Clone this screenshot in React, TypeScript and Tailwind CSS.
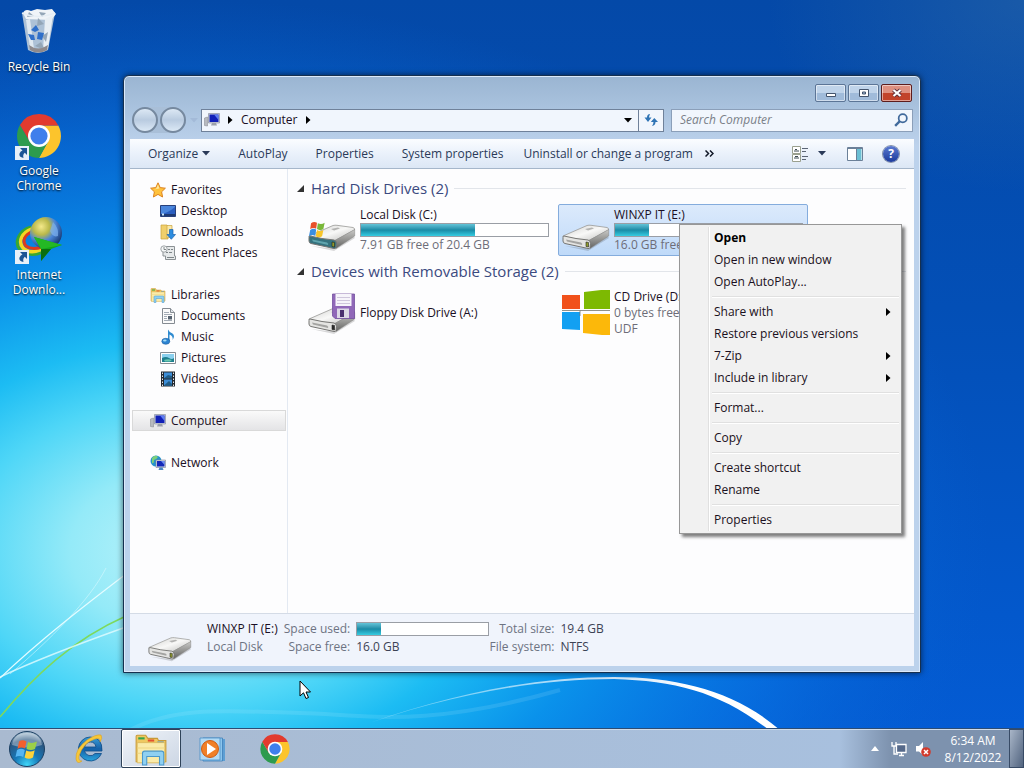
import type { ReactNode } from 'react';

interface NavEntry {
  label: string;
  icon: ReactNode;
  children?: NavEntry[];
  selected?: boolean;
}

interface MenuEntry {
  label: string;
  bold?: boolean;
  submenu?: boolean;
}

/* ---------- Icons ---------- */

function ChromeIcon({ className }: { className?: string }) {
  return (
    <svg viewBox="0 0 48 48" className={className} aria-hidden="true">
      <path d="M24 13.500H43.300A22 22 0 0 1 24 46L33 29.500Z" fill="#fcc42c" />
      <path d="M4.950 13A22 22 0 0 0 24 46L33.200 29.500L24 24L14.800 29.500Z" fill="#2d9b4e" />
      <path d="M4.950 13A22 22 0 0 1 43.300 13.500H24L14.800 29.500Z" fill="#e23b2e" />
      <circle cx="24" cy="24" r="11" fill="#fff" />
      <circle cx="24" cy="24" r="8.600" fill="#3f7fec" />
    </svg>
  );
}

function RecycleBinIcon() {
  return (
    <svg viewBox="0 0 48 48" className="size-12" aria-hidden="true">
      <path d="M7 5L13 42Q23 48 33 42L40 5Z" fill="#bccbd9" fillOpacity=".92" />
      <path d="M8 5Q10 0 16 3L22 1L30 2L37 1L41 6L36 12L11 11Z" fill="#f0f4f8" />
      <path d="M30 11L38 7L33 40L28 43Z" fill="#e9eff4" />
      <path d="M11 12L15 11L19 41L15 40Z" fill="#dfe8f0" />
      <path d="M14 4L19 8L12 9ZM24 4L31 5L27 9ZM23 10L29 16L22 18ZM27 28L33 24L31 34ZM20 38L26 34L30 42Z" fill="#94a6b7" />
      <path d="M14 37Q23 44 33 37L32 42Q23 47 15 42Z" fill="#8f8a8c" />
      <path d="M16 22L21 17L24 22L20 24ZM23 24L29 25L27 32L22 31ZM13 26L19 27L20 32L16 32Z" fill="#2f6fc9" />
      <path d="M7 5Q23 12 40 5" stroke="#e6eef5" strokeWidth="1.500" fill="none" />
    </svg>
  );
}

function IdmIcon() {
  return (
    <svg viewBox="0 0 48 48" className="size-12" aria-hidden="true">
      <defs>
        <radialGradient id="idmGlobe" cx=".35" cy=".3" r=".75">
          <stop offset="0" stopColor="#f4e98a" />
          <stop offset=".35" stopColor="#b9b84a" />
          <stop offset=".6" stopColor="#4a86d8" />
          <stop offset="1" stopColor="#16356e" />
        </radialGradient>
      </defs>
      <path d="M16 11C3 15 -1 27 5 34C10 40 22 39 28 36" fill="none" stroke="#3aa82e" strokeWidth="3" />
      <path d="M17 13C6 17 3 26 8 32C13 37 21 36 28 33" fill="none" stroke="#f4d822" strokeWidth="3.500" />
      <path d="M18 15C9 19 7 25 11 30C15 33 21 33 27 31" fill="none" stroke="#dc3a1e" strokeWidth="3" />
      <circle cx="31" cy="17" r="16" fill="url(#idmGlobe)" />
      <path d="M38 6Q44 12 43 20Q38 22 35 15Z" fill="#7fb2ee" fillOpacity=".7" />
      <path d="M19 21L47 29L36 33L26 45L26 33Z" fill="#12a818" />
      <path d="M19 21L26 33L47 29Z" fill="#24b824" />
      <path d="M26 33L26 45L36 33Z" fill="#0a6d10" />
    </svg>
  );
}

function ShortcutArrow() {
  return (
    <svg viewBox="0 0 14 14" className="absolute bottom-0 left-0 size-3.5" aria-hidden="true">
      <path d="M0 0H14V14H0Z" fill="#e8f0f8" />
      <path d="M5 2H12V9L9.800 6.800Q7.500 8.500 8.500 12Q3.500 11 4.500 7.500Q5.500 5 7.500 4.500Z" fill="#1c5594" />
    </svg>
  );
}

type DriveKind = 'plain' | 'system' | 'floppy';

function DriveIcon({ kind = 'plain', className }: { kind?: DriveKind; className?: string }) {
  return (
    <svg viewBox="0 0 48 48" className={className} aria-hidden="true">
      <defs>
        <linearGradient id="driveTop" x1="0" y1="0" x2="1" y2="1">
          <stop offset="0" stopColor="#cfcfcd" />
          <stop offset=".5" stopColor="#f8f8f7" />
          <stop offset="1" stopColor="#bcbcba" />
        </linearGradient>
        <linearGradient id="driveSide" x1="0" y1="0" x2="0" y2="1">
          <stop offset="0" stopColor="#cacac8" />
          <stop offset="1" stopColor="#636361" />
        </linearGradient>
      </defs>
      <path d="M3 40L26 45L47 32L44 28L20 42Z" fill="#000" fillOpacity=".15" />
      <path d="M1 30L25 19.500Q27 19 29 19.300L45 21.500Q47 22 46.500 24L26 35Q14 34 1 31Z" fill="url(#driveTop)" stroke="#999997" strokeWidth=".8" />
      <path d="M26 35L46.700 23.500V30L28 42.500Z" fill="url(#driveSide)" stroke="#858583" strokeWidth=".5" />
      <path d="M2 30Q14 33 26 34Q28.500 34.500 28.500 37.500L28 41.500Q27.500 43 26 42.500L3 37.500Q1 37 1 35V31.500Q1 30 2 30Z" fill={kind === 'system' ? '#35727e' : '#e4e4e2'} stroke="#757573" strokeWidth="1" />
      <path d="M4 33.500L19 36.500Q21 37.500 20 39L5 35.500Z" fill={kind === 'system' ? '#5fa5ae' : '#a3a3a1'} />
      <path d="M24 36L26.500 36.500V41L24 40.500Z" fill={kind === 'floppy' ? '#2b2b2b' : '#8f9a2a'} stroke="#222" strokeWidth=".6" />
      <path d="M23 23L30 21.500L32 22.500L26 24.500Z" fill="#8a8a88" fillOpacity=".6" />
      {kind === 'system' && (
        <svg x="0" y="15" width="18" height="17" viewBox="0 0 20 20">
          <path d="M3 2.500Q6.500 0 10 2L9 9Q5.500 7 2 9.500Z" fill="#e8512a" />
          <path d="M11 2.500Q15 4.500 19 2L17.500 9.500Q14 12 10 9.500Z" fill="#7ab83a" />
          <path d="M2 10.500Q5.500 8 9 10L8 17.500Q4.500 15.500 .5 18Z" fill="#3a8ee0" />
          <path d="M10 10.500Q14 13 17.500 10.500L16 18Q12.500 20.500 8.500 18Z" fill="#f8c52a" />
        </svg>
      )}
      {kind === 'floppy' && (
        <g>
          <path d="M24.500 5H46.500V29.500H27L24.500 27Z" fill="#9068b8" stroke="#7450a0" strokeWidth=".8" />
          <path d="M27.500 5H43.500V17H27.500Z" fill="#f6f4fa" />
          <path d="M29 8.500H42M29 11.500H42M29 14.500H42" stroke="#cfc6dc" />
          <path d="M29 19.500H41V29H29Z" fill="#dcd8e6" />
          <path d="M32 21H36V28H32Z" fill="#4a3070" />
        </g>
      )}
    </svg>
  );
}

function MicrosoftIcon({ className }: { className?: string }) {
  return (
    <svg viewBox="0 0 48 48" className={className} aria-hidden="true">
      <path d="M0 6H18V20H0Z" fill="#f1511b" />
      <path d="M22 3L39 1H48V20H22Z" fill="#7db902" />
      <path d="M0 23H18V41L0 40Z" fill="#12a0f2" />
      <path d="M21 25H48V46H40L21 44Z" fill="#fcb80a" />
      <path d="M0 21.500H18M18 27V21.500H48" fill="none" stroke="#76766c" strokeWidth=".8" />
    </svg>
  );
}

function ComputerIcon() {
  return (
    <svg viewBox="0 0 16 16" className="size-4" aria-hidden="true">
      <path d="M.5 6L3.500 5V14L.5 13.500Z" fill="#b7bac0" stroke="#8d9097" strokeWidth=".6" />
      <path d="M4.500 1.500H15.500V11H4.500Z" fill="#cfd3dc" stroke="#8a90a2" strokeWidth=".7" />
      <path d="M5.500 2.500H14.500V10H5.500Z" fill="#1120b8" />
      <path d="M10 2.500H14.500V8Z" fill="#5d7df0" />
      <path d="M8 11H12L13 13.500H7Z" fill="#9ba0ab" />
    </svg>
  );
}

function NetworkIcon() {
  return (
    <svg viewBox="0 0 16 16" className="size-4" aria-hidden="true">
      <circle cx="6" cy="6" r="5.500" fill="#2692cc" />
      <path d="M2 3Q5 -1 8 2Q6 5 4 5Q4 9 2 8Z" fill="#7ccf7a" />
      <path d="M6 5H15.500V12.500H6Z" fill="#d5d9e2" stroke="#7c8598" strokeWidth=".6" />
      <path d="M7 6H14.500V11.500H7Z" fill="#1428b8" />
      <path d="M11 6H14.500V10Z" fill="#6f90f2" />
      <path d="M9.500 12.500H12.500L13.500 15H8.500Z" fill="#4c87c4" />
    </svg>
  );
}

function StarIcon() {
  return (
    <svg viewBox="0 0 16 16" className="size-4" aria-hidden="true">
      <path d="M8 .8L10.200 5.600L15.400 6.200L11.600 9.800L12.600 15L8 12.400L3.400 15L4.400 9.800L.6 6.200L5.800 5.600Z" fill="#ffc23c" stroke="#dd8320" strokeWidth="1" />
      <path d="M8 2.500L9.300 6.500L4 7.500L6.300 6.400Z" fill="#ffe9a0" />
    </svg>
  );
}

function DesktopIcon() {
  return (
    <svg viewBox="0 0 16 16" className="size-4" aria-hidden="true">
      <path d="M.5 2.500H15.500V13.500H.5Z" fill="#2b5fc0" stroke="#28407a" />
      <path d="M1 11Q8 10 15 4V3H1Z" fill="#4b86dc" />
      <path d="M1 12H15" stroke="#1c2e58" strokeWidth="1.500" />
      <path d="M2 10.500H4V12.500H2Z" fill="#c9e6fa" />
    </svg>
  );
}

function DownloadsIcon() {
  return (
    <svg viewBox="0 0 16 16" className="size-4" aria-hidden="true">
      <path d="M1 1H7L8 3V15H1Z" fill="#f0cf6c" stroke="#c9a23e" strokeWidth=".7" />
      <path d="M7 1.500H12V12L7 14Z" fill="#fae9a8" stroke="#c9a23e" strokeWidth=".7" />
      <path d="M9.500 5.500H13V10.500H15.500L11.300 15.300L7 10.500H9.500Z" fill="#2c8de0" stroke="#1b62ac" strokeWidth=".7" />
    </svg>
  );
}

function RecentIcon() {
  return (
    <svg viewBox="0 0 16 16" className="size-4" aria-hidden="true">
      <path d="M3 1.500H14.500V11H15.500V14.500H5.500V11H3Z" fill="#e6e9ea" stroke="#8b9194" />
      <circle cx="4" cy="4" r="3.200" fill="#f6f8f8" stroke="#8b9194" strokeWidth=".8" />
      <path d="M4 2V4.500H6" stroke="#676d70" fill="none" strokeWidth=".8" />
      <path d="M8 4.500H10M11 4.500H13M6 7.500H8M9 7.500H12M7 12.500H14" stroke="#7d8487" fill="none" />
    </svg>
  );
}

function LibrariesIcon({ className = 'size-4' }: { className?: string }) {
  return (
    <svg viewBox="0 0 32 32" className={className} aria-hidden="true">
      <path d="M2 4Q2 3 3 3H11L13 6H22L23 8H30V28H2Z" fill="#efc860" stroke="#c89a38" strokeWidth="1" />
      <path d="M4 5H10V7H4Z" fill="#35a34a" />
      <path d="M13 7H19V9H13Z" fill="#e25230" />
      <path d="M22 9H28V11H22Z" fill="#3b8bd8" />
      <path d="M3 10H29V29H3Z" fill="#faebaa" stroke="#dcb85a" strokeWidth=".8" />
      <path d="M3 15H29M3 20H29" stroke="#eed580" />
      <path d="M8 31V20Q8 18 10 18H26Q28 18 28 20V31H24V23H12V31Z" fill="#8fd0f2" stroke="#4a98cc" strokeWidth="1" />
    </svg>
  );
}

function DocumentIcon() {
  return (
    <svg viewBox="0 0 16 16" className="size-4" aria-hidden="true">
      <path d="M2.500 .5H10.500L14.500 4.500V15.500H2.500Z" fill="#fbfbfb" stroke="#858b92" />
      <path d="M10.500 .5V4.500H14.500" fill="#dfe3e8" stroke="#858b92" />
      <path d="M4 4.500H9M4 6.500H12M4 8.500H7M4 10.500H7M4 12.500H12" stroke="#a3abb5" />
      <path d="M8 8H12V11.500H8Z" fill="#566270" />
    </svg>
  );
}

function MusicIcon() {
  return (
    <svg viewBox="0 0 16 16" className="size-4" aria-hidden="true">
      <path d="M8 .5Q9 3 12.500 4.500Q15.500 7 12.500 11Q13.500 7 9.500 5.500V12H8Z" fill="#2f8bd0" />
      <ellipse cx="5.800" cy="12.300" rx="4" ry="3" fill="#2c84d2" stroke="#1b5e9e" strokeWidth=".6" />
      <ellipse cx="4.800" cy="11.500" rx="1.800" ry="1" fill="#a3dcf7" />
    </svg>
  );
}

function PictureIcon() {
  return (
    <svg viewBox="0 0 16 16" className="size-4" aria-hidden="true">
      <path d="M.5 2.500H15.500V13.500H.5Z" fill="#fff" stroke="#868c93" />
      <path d="M2 4H14V12H2Z" fill="#8bd0ee" />
      <path d="M2 8Q6 6 9 8T14 8V12H2Z" fill="#1f7f8e" />
      <path d="M4 10Q8 8.500 12 10L10 11.500H5Z" fill="#6cc7b0" />
    </svg>
  );
}

function VideoIcon() {
  return (
    <svg viewBox="0 0 16 16" className="size-4" aria-hidden="true">
      <path d="M1 .5H15V15.500H1Z" fill="#23282f" />
      <path d="M4 1.500H12V7.300H4ZM4 8.500H12V14.500H4Z" fill="#3d8ed8" />
      <path d="M4 7.300L8 4L12 5V7.300ZM4 14.500L9 10L12 13V14.500Z" fill="#215c86" />
      <path d="M2.500 1.500V15M13.500 1.500V15" stroke="#e4e8ec" strokeDasharray="1.500 1.500" />
    </svg>
  );
}

function DownTriangle() {
  return (
    <svg viewBox="0 0 8 5" className="h-[5px] w-2 shrink-0" aria-hidden="true">
      <path d="M0 0H8L4 4.500Z" fill="currentColor" />
    </svg>
  );
}

function RightTriangle() {
  return (
    <svg viewBox="0 0 5 8" className="h-2 w-[5px] shrink-0" aria-hidden="true">
      <path d="M0 0V8L4.500 4Z" fill="#000" />
    </svg>
  );
}

function StartOrb() {
  return (
    <svg viewBox="0 0 38 38" className="size-[38px]" aria-hidden="true">
      <defs>
        <radialGradient id="orb" cx=".5" cy=".95" r=".9">
          <stop offset="0" stopColor="#3ed6f8" />
          <stop offset=".4" stopColor="#1678b8" />
          <stop offset=".8" stopColor="#2a5680" />
          <stop offset="1" stopColor="#9fb8cc" />
        </radialGradient>
      </defs>
      <circle cx="19" cy="19" r="17.500" fill="url(#orb)" stroke="#1b3f62" strokeWidth="1" />
      <path d="M4 15Q6 3 19 3T34 15Q19 20 4 15Z" fill="#fff" fillOpacity=".35" />
      <path d="M11 11.500Q14.500 9 18.500 11.500L17 18.500Q13 16.500 9.500 19Z" fill="#f2602e" />
      <path d="M20 12Q24 14 29 11.500L27 19Q23 21 18.500 19Z" fill="#9bd048" />
      <path d="M9 20Q13 17.500 16.800 20L15.200 27Q11.500 25 7.500 27Z" fill="#55b5f2" />
      <path d="M18.200 20.500Q22.500 22.500 26.700 20.200L25 27.500Q21 30 16.600 27.500Z" fill="#fdd23a" />
    </svg>
  );
}

function IeIcon() {
  return (
    <svg viewBox="0 0 32 32" className="size-8" aria-hidden="true">
      <defs>
        <linearGradient id="ieBlue" x1="0" y1="0" x2="0" y2="1">
          <stop offset="0" stopColor="#3c9fd8" />
          <stop offset=".5" stopColor="#1560a8" />
          <stop offset="1" stopColor="#2aa4dc" />
        </linearGradient>
      </defs>
      <path d="M17 4A12 12 0 1 0 28.500 20.500H22A6 6 0 0 1 11.500 18H29Q29.500 4 17 4ZM11.500 14Q13 9 17.500 9T23 14Z" fill="url(#ieBlue)" stroke="#0c4a86" strokeWidth=".8" />
      <path d="M28 2Q30 5 27 9Q28 4 22 6Q10 10 6 23Q5 28 9 28Q4 32 3 26Q2 16 14 7Q23 1 28 2Z" fill="#f6c73a" stroke="#d79a1e" strokeWidth=".5" />
    </svg>
  );
}

function MediaPlayerIcon() {
  return (
    <svg viewBox="0 0 32 32" className="size-8" aria-hidden="true">
      <path d="M9 6H28V28H9Z" fill="#5d9fd4" />
      <path d="M6 5H25.500V28H6Z" fill="#8cc5ec" stroke="#3f7fb8" strokeWidth=".8" />
      <path d="M3 5H23V27H3Z" fill="#b3daf4" stroke="#4a8fc8" strokeWidth=".8" />
      <circle cx="13" cy="16" r="8.500" fill="#f08028" stroke="#cf5c12" strokeWidth="1" />
      <path d="M10 10L19 16L10 22Z" fill="#fff" />
    </svg>
  );
}

/* ---------- Data ---------- */

const navTree: NavEntry[] = [
  {
    label: 'Favorites',
    icon: <StarIcon />,
    children: [
      { label: 'Desktop', icon: <DesktopIcon /> },
      { label: 'Downloads', icon: <DownloadsIcon /> },
      { label: 'Recent Places', icon: <RecentIcon /> },
    ],
  },
  {
    label: 'Libraries',
    icon: <LibrariesIcon />,
    children: [
      { label: 'Documents', icon: <DocumentIcon /> },
      { label: 'Music', icon: <MusicIcon /> },
      { label: 'Pictures', icon: <PictureIcon /> },
      { label: 'Videos', icon: <VideoIcon /> },
    ],
  },
  { label: 'Computer', icon: <ComputerIcon />, selected: true },
  { label: 'Network', icon: <NetworkIcon /> },
];

const menuGroups: MenuEntry[][] = [
  [{ label: 'Open', bold: true }, { label: 'Open in new window' }, { label: 'Open AutoPlay...' }],
  [
    { label: 'Share with', submenu: true },
    { label: 'Restore previous versions' },
    { label: '7-Zip', submenu: true },
    { label: 'Include in library', submenu: true },
  ],
  [{ label: 'Format...' }],
  [{ label: 'Copy' }],
  [{ label: 'Create shortcut' }, { label: 'Rename' }],
  [{ label: 'Properties' }],
];

/* ---------- Pieces ---------- */

function Wallpaper() {
  return (
    <svg viewBox="0 0 1024 768" preserveAspectRatio="none" className="absolute inset-0 size-full" aria-hidden="true">
      <defs>
        <linearGradient id="sky" x1="0" y1="0" x2="0" y2="1">
          <stop offset="0" stopColor="#0449a8" />
          <stop offset=".4" stopColor="#034fb6" />
          <stop offset=".8" stopColor="#0358cc" />
          <stop offset="1" stopColor="#045cd6" />
        </linearGradient>
        <radialGradient id="glow" gradientUnits="userSpaceOnUse" cx="0" cy="0" r="1" gradientTransform="translate(190 550) scale(800 550)">
          <stop offset="0" stopColor="#c0f4fa" />
          <stop offset=".15" stopColor="#94eaf8" />
          <stop offset=".28" stopColor="#4ed6f7" />
          <stop offset=".38" stopColor="#1cbcf3" />
          <stop offset=".53" stopColor="#0a94ec" stopOpacity=".95" />
          <stop offset=".75" stopColor="#0878e6" stopOpacity=".6" />
          <stop offset="1" stopColor="#0560d0" stopOpacity="0" />
        </radialGradient>
        <radialGradient id="corner" cx="1" cy="0" r=".25">
          <stop offset="0" stopColor="#3f78a8" stopOpacity=".35" />
          <stop offset="1" stopColor="#3f78a8" stopOpacity="0" />
        </radialGradient>
        <linearGradient id="arc" x1="0" y1="0" x2="1" y2="0">
          <stop offset="0" stopColor="#fff" stopOpacity=".2" />
          <stop offset=".5" stopColor="#fff" stopOpacity=".7" />
          <stop offset=".8" stopColor="#fff" />
        </linearGradient>
      </defs>
      <path d="M0 0H1024V768H0Z" fill="url(#sky)" />
      <path d="M0 0H1024V768H0Z" fill="url(#glow)" />
      <path d="M0 0H1024V768H0Z" fill="url(#corner)" />
      <path d="M0 717C34 676 72 640 126 616" stroke="#7ed95c" strokeWidth="1.500" fill="none" />
      <path d="M0 678C40 640 84 606 126 574" stroke="#e4fcff" strokeWidth="1.200" fill="none" />
      <path d="M0 677C40 658 84 642 126 627" stroke="#e4fcff" strokeOpacity=".8" strokeWidth="1.500" fill="none" />
      <path d="M10 674C50 640 90 600 106 568" stroke="#e4fcff" strokeOpacity=".5" fill="none" />
      <path d="M130 730C180 704 240 712 300 713S420 730 560 690" stroke="#d8faff" strokeOpacity=".12" strokeWidth="4" fill="none" />
      <path d="M350 730C440 696 530 677 614 677C680 677 736 692 780 730H769C720 692 676 681 614 679C530 679 440 697 350 730Z" fill="url(#arc)" />
    </svg>
  );
}

function DesktopShortcut({ label, shortcut, children }: { label: string; shortcut?: boolean; children: ReactNode }) {
  return (
    <button className="flex h-[104px] w-[74px] flex-col items-center gap-[3px] text-white">
      <span className="relative">
        {children}
        {shortcut && <ShortcutArrow />}
      </span>
      <span className="w-16 text-center text-[12px] leading-[15px] [text-shadow:0_1px_2px_#000]">{label}</span>
    </button>
  );
}

function UsageBar({ percent }: { percent: number }) {
  return (
    <div className="h-3.5 w-full border border-[#9a9ea5] bg-white">
      <div className="h-full bg-linear-to-b from-[#62c4d8] via-[#1a8ba6] to-[#36cde2]" style={{ width: `${percent}%` }} />
    </div>
  );
}

function NavRow({ entry, nested }: { entry: NavEntry; nested?: boolean }) {
  return (
    <a
      href="#"
      className={`flex h-[21px] items-center gap-[5px] border text-[#1a0f24] ${nested ? 'pl-[27px]' : 'pl-[17px]'} ${
        entry.selected ? 'border-[#d9d9d9] bg-linear-to-b from-[#fafafa] to-[#e4e4e6]' : 'border-transparent'
      }`}
    >
      {entry.icon}
      {entry.label}
    </a>
  );
}

function GroupHeader({ title }: { title: string }) {
  return (
    <h2 className="flex h-[31px] items-center text-[15px] text-[#3b4a80]">
      <svg viewBox="0 0 7 7" className="mr-[7px] size-[7px]" aria-hidden="true">
        <path d="M7 0V7H0Z" fill="#333" />
      </svg>
      {title}
      <span className="mr-2 ml-1.5 h-px flex-1 bg-[#e2e5ea]" />
    </h2>
  );
}

interface DriveTileProps {
  name: string;
  icon: ReactNode;
  percent?: number;
  lines?: string[];
  selected?: boolean;
  children?: ReactNode;
}

function DriveTile({ name, icon, percent, lines = [], selected, children }: DriveTileProps) {
  return (
    <div
      className={`relative h-[52px] rounded-xs border ${
        selected ? 'border-[#84acdd] bg-linear-to-b from-[#dceafc] to-[#bfdaf9]' : 'border-transparent'
      }`}
    >
      <button className="flex h-full w-full items-center gap-1 pr-1 pl-[3px] text-left leading-4 whitespace-nowrap">
        {icon}
        <span className="min-w-0 flex-1">
          <span className="block text-[#1a0f24]">{name}</span>
          {percent !== undefined && <UsageBar percent={percent} />}
          {lines.map(line => (
            <span key={line} className="block text-[#6d6d78]">{line}</span>
          ))}
        </span>
      </button>
      {children}
    </div>
  );
}

function ContextMenu() {
  return (
    <div role="menu" className="absolute top-[19px] left-[120px] z-10 w-[223px] border border-[#979797] bg-[#f1f1f1] p-0.5 shadow-[3px_3px_3px_rgba(0,0,0,0.5)]">
      {menuGroups.map((group, i) => (
        <div key={i}>
          {i > 0 && (
            <div className="flex h-2 items-center">
              <div className="ml-[30px] h-0.5 flex-1 border-t border-[#e0e0e0] bg-white" />
            </div>
          )}
          {group.map(item => (
            <button key={item.label} role="menuitem" className="flex h-[22px] w-full items-center justify-between pr-2 pl-8 text-[#1a1020]">
              <span className={item.bold ? 'font-bold text-black' : ''}>{item.label}</span>
              {item.submenu && <RightTriangle />}
            </button>
          ))}
        </div>
      ))}
      <div className="pointer-events-none absolute inset-y-0.5 left-7 w-0.5 border-l border-[#e0e0e0] bg-white" />
    </div>
  );
}

function TitleBar() {
  const base = 'flex h-[18px] w-[31px] items-center justify-center rounded-[2px] border shadow-[inset_0_0_0_1px_rgba(255,255,255,0.5)]';
  const glass = 'border-[#5c7596] bg-linear-to-b from-[#c0d4ea] from-50% to-[#a0bbda] to-50%';
  return (
    <div className="flex h-8 items-start justify-end gap-0.5 pt-2 pr-0.5">
      <button aria-label="Minimize" className={`${base} ${glass}`}>
        <svg viewBox="0 0 12 12" className="size-3"><path d="M1.500 6.500H10.500V9.500H1.500Z" fill="#fff" stroke="#44546c" /></svg>
      </button>
      <button aria-label="Maximize" className={`${base} ${glass}`}>
        <svg viewBox="0 0 12 12" className="size-3">
          <path d="M1.500 2.500H10.500V9.500H1.500Z" fill="#fff" stroke="#44546c" />
          <path d="M4.500 5H7.500V7H4.500Z" fill="#9db9d8" stroke="#44546c" />
        </svg>
      </button>
      <button aria-label="Close" className={`${base} border-[#5d1d1d] bg-linear-to-b from-[#de9080] from-50% to-[#c2432b] to-50%`}>
        <svg viewBox="0 0 12 12" className="size-3">
          <path d="M2.500 3L9.500 9M9.500 3L2.500 9" stroke="#60303a" strokeWidth="4" />
          <path d="M2.500 3L9.500 9M9.500 3L2.500 9" stroke="#fff" strokeWidth="2.200" />
        </svg>
      </button>
    </div>
  );
}

function AddressRow() {
  const round = 'size-[26px] rounded-full border-2 border-[#76899f] bg-linear-to-b from-[#dce8f4] via-[#b9cbe0] to-[#dbe8f5]';
  return (
    <div className="flex h-[31px] items-center pb-[7px] pl-0.5">
      <div className="flex items-center gap-0.5 rounded-full bg-[#a9bfd8]">
        <button aria-label="Back" className={round} />
        <button aria-label="Forward" className={round} />
      </div>
      <button aria-label="Recent pages" className="mr-[3px] ml-1 text-[#a3bad8]"><DownTriangle /></button>
      <div className="flex h-[23px] min-w-0 flex-1 items-center border border-[#6f819a] bg-[#f1f6fd] text-[#1a0f24]">
        <div className="flex flex-1 items-center gap-2 pl-0.5">
          <ComputerIcon />
          <RightTriangle />
          <button className="text-[12px]">Computer</button>
          <RightTriangle />
        </div>
        <button aria-label="Previous locations" className="px-1.5 text-black"><DownTriangle /></button>
        <button aria-label="Refresh" className="flex h-full w-[25px] items-center justify-center border-l border-[#6f819a]">
          <svg viewBox="0 0 14 14" className="size-3.5" aria-hidden="true">
            <path d="M6 1Q3 1 3 4.500H.5L4 9L7.500 4.500H5Q5 3 6 1Z" fill="#2f74b5" />
            <path d="M8 13Q11.500 12.500 11.500 9H14L10.300 5L6.800 9H9.500Q9.500 11 8 13Z" fill="#2f74b5" />
          </svg>
        </button>
      </div>
      <label className="mr-px ml-[7px] flex h-[23px] w-[242px] items-center border border-[#8b9fb9] bg-[#f1f6fd] pr-1 pl-2">
        <input type="search" aria-label="Search Computer" placeholder="Search Computer" className="min-w-0 flex-1 bg-transparent italic outline-none placeholder:text-[#7a7f88]" />
        <svg viewBox="0 0 12 12" className="size-3.5" aria-hidden="true">
          <circle cx="7.500" cy="4.500" r="3.500" fill="none" stroke="#416a9c" strokeWidth="1.500" />
          <path d="M5 7L1 11" stroke="#416a9c" strokeWidth="2" />
        </svg>
      </label>
    </div>
  );
}

function Toolbar() {
  return (
    <div className="flex h-[30px] items-center border-b border-[#a5b6ca] bg-linear-to-b from-[#fbfdff] via-[#eaf1fb] to-[#dce7f5] pr-[15px] pl-[18px] whitespace-nowrap text-[#2a3a58]">
      <div className="flex items-center gap-7">
        <button className="flex items-center gap-1">Organize <DownTriangle /></button>
        <button>AutoPlay</button>
        <button>Properties</button>
        <button>System properties</button>
      </div>
      <button className="mr-3 ml-5">Uninstall or change a program</button>
      <button aria-label="More commands" className="text-[#111827]">
        <svg viewBox="0 0 9 7" className="h-[7px] w-[9px]"><path d="M.5 .5L3.500 3.500L.5 6.500M5 .5L8 3.500L5 6.500" fill="none" stroke="currentColor" strokeWidth="1.500" /></svg>
      </button>
      <div className="flex-1" />
      <button aria-label="Change your view" className="mr-2.5">
        <svg viewBox="0 0 16 16" className="size-4">
          <path d="M.5 .5H8.500V7.500H.5ZM.5 8.500H8.500V15.500H.5Z" fill="#fff" stroke="#9aa08f" />
          <path d="M2 5H7M2 12H7M3 3.500H5M3 10.500H6" stroke="#3d4a52" />
          <path d="M10 2.500H16M10 5.500H14M10 10.500H16M10 13.500H14" stroke="#5a6474" />
        </svg>
      </button>
      <button aria-label="More view options" className="mr-[21px]"><DownTriangle /></button>
      <button aria-label="Show the preview pane" className="mr-5">
        <svg viewBox="0 0 16 16" className="size-4">
          <path d="M.5 1.500H15.500V14.500H.5Z" fill="#fff" stroke="#6b8098" />
          <path d="M10 3H14.500V14H10Z" fill="#6cc0d4" />
          <path d="M1 2.500H15M9.500 3V14" stroke="#6b8098" />
        </svg>
      </button>
      <button aria-label="Get help" className="flex size-4 items-center justify-center rounded-full bg-linear-to-b from-[#5c7ad0] to-[#1c3a9c] text-[12px] leading-none font-bold text-white ring-1 ring-[#8290a8]">?</button>
    </div>
  );
}

function DetailsPane() {
  return (
    <div className="flex h-[53px] items-start border-t border-[#d4dbe6] bg-[#f0f4fc] pt-1.5 pl-[18px] text-[#6d7382]">
      <DriveIcon className="mr-[15px] size-11" />
      <div className="grid grid-cols-[auto_auto_133px_auto_auto] items-center gap-x-1.5 text-[12px] leading-[18px] whitespace-nowrap">
        <span className="text-[#1a0f24]">WINXP IT (E:)</span>
        <span className="text-right">Space used:</span>
        <UsageBar percent={18} />
        <span className="pl-1 text-right">Total size:</span>
        <span className="text-[#3c4254]">19.4 GB</span>
        <span>Local Disk</span>
        <span className="text-right">Space free:</span>
        <div className="col-span-2 flex justify-between">
          <span className="text-[#3c4254]">16.0 GB</span>
          <span>File system:</span>
        </div>
        <span className="text-[#3c4254]">NTFS</span>
      </div>
    </div>
  );
}

function ExplorerWindow() {
  return (
    <section aria-label="Computer" className="absolute top-[75px] right-[103px] bottom-[55px] left-[123px] flex flex-col rounded-t-md border border-[#16304f] bg-[#b9d0ea] bg-linear-to-b from-[#9ab5d2] to-[#bcd2ec] to-[70px] px-1.5 pb-1.5 shadow-[inset_0_0_0_1px_#dceafa,0_0_6px_rgba(0,0,0,0.6)]">
      <TitleBar />
      <AddressRow />
      <Toolbar />
      <div className="flex min-h-0 flex-1 bg-[#fdfdfe]">
        <nav className="w-[158px] shrink-0 border-r border-[#e3e9f2] pt-2.5 pr-px pl-0.5">
          {navTree.map(entry => (
            <div key={entry.label} className="mb-[21px]">
              <NavRow entry={entry} />
              {entry.children?.map(child => <NavRow key={child.label} entry={child} nested />)}
            </div>
          ))}
        </nav>
        <main className="min-w-0 flex-1 pt-1 pl-[9px]">
          <GroupHeader title="Hard Disk Drives (2)" />
          <div className="grid grid-cols-[repeat(auto-fill,250px)] gap-x-1 pl-[7px]">
            <DriveTile name="Local Disk (C:)" icon={<DriveIcon kind="system" className="size-12" />} percent={61} lines={['7.91 GB free of 20.4 GB']} />
            <DriveTile name="WINXP IT (E:)" icon={<DriveIcon className="size-12" />} percent={18} lines={['16.0 GB free']} selected>
              <ContextMenu />
            </DriveTile>
          </div>
          <GroupHeader title="Devices with Removable Storage (2)" />
          <div className="grid grid-cols-[repeat(auto-fill,250px)] gap-x-1 pl-[7px]">
            <DriveTile name="Floppy Disk Drive (A:)" icon={<DriveIcon kind="floppy" className="size-12" />} />
            <DriveTile name="CD Drive (D:)" icon={<MicrosoftIcon className="size-12" />} lines={['0 bytes free', 'UDF']} />
          </div>
        </main>
      </div>
      <DetailsPane />
    </section>
  );
}

function Taskbar() {
  const slot = 'flex h-full w-[60px] items-center justify-center';
  return (
    <footer className="relative flex h-10 items-stretch border-t border-[#2c4c74] bg-linear-to-r from-[#a9bad0] via-[#a8c0de] via-82% to-[#7d92ae] to-87% shadow-[inset_0_1px_0_#cfdcea]">
      <button aria-label="Start" className="flex w-[54px] items-center justify-center"><StartOrb /></button>
      <div className="ml-[5px] flex gap-0.5">
        <button aria-label="Internet Explorer" className={slot}><IeIcon /></button>
        <button aria-label="Windows Explorer" className={`${slot} rounded-xs border border-[#2e4258] bg-linear-to-br from-[#f0f4f9] to-[#ccd6e4] shadow-[inset_0_0_0_1px_#fff]`}>
          <LibrariesIcon className="size-[34px]" />
        </button>
        <button aria-label="Media Player" className={slot}><MediaPlayerIcon /></button>
        <button aria-label="Chrome" className={slot}><ChromeIcon className="size-8" /></button>
      </div>
      <div className="flex-1" />
      <div className="flex items-center gap-2 text-white">
        <button aria-label="Show hidden icons">
          <svg viewBox="0 0 8 5" className="h-[5px] w-2"><path d="M0 5H8L4 0Z" fill="#fff" /></svg>
        </button>
        <button aria-label="Network status" className="ml-1">
          <svg viewBox="0 0 16 16" className="size-4">
            <path d="M5.500 3.500H15V11.500H5.500ZM8 14.500H13M10.500 12V14" fill="#55698a" stroke="#fff" strokeWidth="1.300" />
            <path d="M1 1V5H5V1M3 5V13H7" fill="none" stroke="#fff" strokeWidth="1.300" />
          </svg>
        </button>
        <button aria-label="Volume muted">
          <svg viewBox="0 0 16 16" className="size-4">
            <path d="M1 5H4L8 1V14L4 10.500H1Z" fill="#fff" />
            <circle cx="11" cy="11" r="4.800" fill="#d23a2c" />
            <path d="M9 9L13 13M13 9L9 13" stroke="#fff" strokeWidth="1.500" />
          </svg>
        </button>
        <button className="w-[66px] pl-0.5 text-center text-[12px] leading-[17px]">
          <time className="block">6:34 AM</time>
          <time className="block">8/12/2022</time>
        </button>
      </div>
      <button aria-label="Show desktop" className="ml-1 w-[15px] border border-[#384b66] bg-linear-to-br from-[#a9b6c8] to-[#52647f]" />
    </footer>
  );
}

export default function App() {
  return (
    <div className="relative flex min-h-screen flex-col overflow-hidden bg-[#0560d0] font-['Open_Sans','Noto_Sans',sans-serif] text-[12px] select-none">
      <Wallpaper />
      <div className="relative min-h-[640px] flex-1">
        <div className="flex flex-col items-start pt-2 pl-0.5">
          <DesktopShortcut label="Recycle Bin"><RecycleBinIcon /></DesktopShortcut>
          <DesktopShortcut label="Google Chrome" shortcut><ChromeIcon className="size-12" /></DesktopShortcut>
          <DesktopShortcut label="Internet Downlo..." shortcut><IdmIcon /></DesktopShortcut>
        </div>
        <ExplorerWindow />
        {/* Mouse pointer */}
        <svg viewBox="0 0 13 20" className="absolute top-[680px] left-[299px] h-5 w-[13px]" aria-hidden="true">
          <path d="M1 1V16L4.500 12.800L7 18.500L9.500 17.500L7 12H11.500Z" fill="#fff" stroke="#000" />
        </svg>
      </div>
      <Taskbar />
    </div>
  );
}
